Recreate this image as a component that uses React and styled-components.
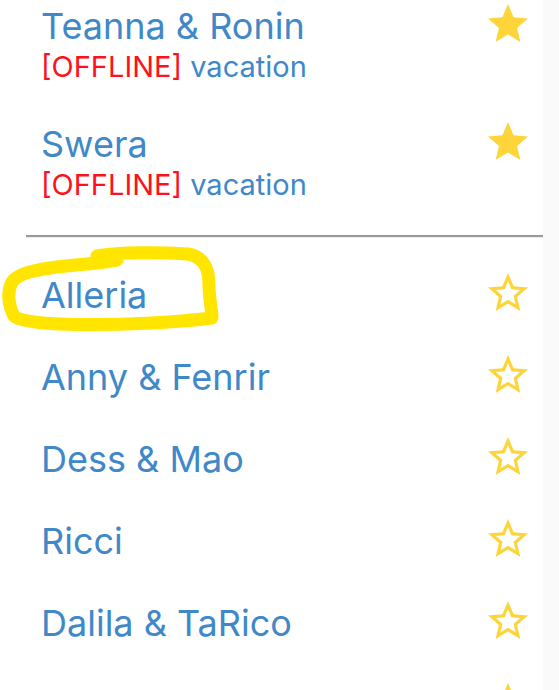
import React from 'react';
import styled, { createGlobalStyle } from 'styled-components';
import { MdStar, MdStarBorder } from 'react-icons/md';

const GlobalStyle = createGlobalStyle`
  html, body {
    margin: 0;
    padding: 0;
    background: #ffffff;
  }
  body {
    font-family: Inter, "Noto Sans", sans-serif;
    overflow: hidden;
  }
`;

const Page = styled.div`
  position: relative;
  display: grid;
  grid-template-columns: 1fr 16px;
  height: 690px;
  overflow: hidden;
`;

const List = styled.div`
  display: flex;
  flex-direction: column;
  margin-top: -13px;
`;

const ScrollTrack = styled.div`
  background: #fafafa;
`;

const Item = styled.div`
  display: flex;
  align-items: flex-start;
  justify-content: space-between;
  padding: ${props => props.withSub ? '18px 11px 19px 42px' : '19px 11px 20px 42px'};
`;

const Texts = styled.div`
  display: flex;
  flex-direction: column;
  margin-left: -1px;
`;

const Name = styled.div`
  font-size: 36px;
  line-height: 43px;
  color: #4088c8;
`;

const Sub = styled.div`
  font-size: 29px;
  line-height: 38px;
  color: #4088c8;
`;

const Offline = styled.span`
  color: #ff1020;
`;

const StarButton = styled.span`
  display: flex;
  margin-top: -5px;
  color: #fdd53b;
`;

const Divider = styled.hr`
  margin: 12px 0 17px 26px;
  border: 0;
  border-top: 2px solid #9a9a9a;
  border-bottom: 1px solid #ececec;
  height: 0;
`;

/* hand-drawn marker ring that sits over the list */
const Scribble = styled.svg`
  position: absolute;
  left: 0;
  top: 0;
  pointer-events: none;
`;

const favourites = [
  { name: 'Teanna & Ronin', status: 'vacation' },
  { name: 'Swera', status: 'vacation' },
];

const others = ['Alleria', 'Anny & Fenrir', 'Dess & Mao', 'Ricci', 'Dalila & TaRico', 'Nova'];

const Entry = ({ name, status, starred }) => (
  <Item withSub={!!status}>
    <Texts>
      <Name>{name}</Name>
      {status && (
        <Sub><Offline>[OFFLINE]</Offline> {status}</Sub>
      )}
    </Texts>
    <StarButton>
      {starred ? <MdStar size={48} /> : <MdStarBorder size={48} />}
    </StarButton>
  </Item>
);

export default function App() {
  return (
    <Page>
      <GlobalStyle />
      <List>
        {favourites.map(f => <Entry key={f.name} name={f.name} status={f.status} starred />)}
        <Divider />
        {others.map(n => <Entry key={n} name={n} />)}
      </List>
      <ScrollTrack />
      <Scribble width="559" height="690" viewBox="0 0 559 690">
        <path
          d="M97 256 C120 252 160 252 188 254 C204 257 209 268 209 285 C209 298 212 310 212 318 C180 322 120 326 60 324 C35 323 18 320 14 316 C8 305 7 292 12 282 C18 274 30 271 50 268 C70 265 95 264 117 260 C118 258 110 256 100 258"
          fill="none"
          stroke="#ffe500"
          strokeWidth="13"
          strokeLinecap="round"
          strokeLinejoin="round"
        />
      </Scribble>
    </Page>
  );
}
